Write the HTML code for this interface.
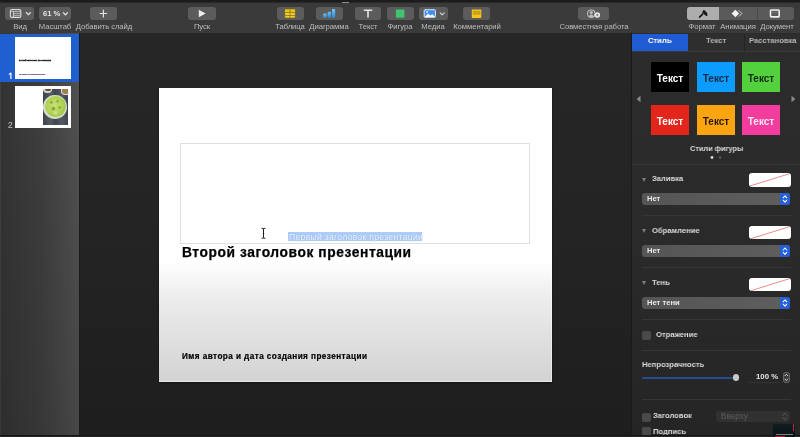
<!DOCTYPE html>
<html><head><meta charset="utf-8">
<style>
*{margin:0;padding:0;box-sizing:border-box}
html,body{width:800px;height:437px;overflow:hidden;background:linear-gradient(180deg,#272727 0%,#242424 50%,#1e1e1e 100%);font-family:"Liberation Sans",sans-serif}
.a{position:absolute}
svg{position:absolute;overflow:visible}
.lbl,.plbl,.sw,.dd span,.num,.t{will-change:transform}
#top{left:0;top:0;width:800px;height:3px;background:linear-gradient(180deg,#1a1a1a 0%,#1c1c1c 50%,#2e2e2e 100%)}
#tb{left:0;top:3px;width:800px;height:30px;background:#3a3a3a}
.btn{position:absolute;top:6.5px;height:13.7px;background:#5c5c5c;border-radius:3px}
.lbl{position:absolute;top:22.2px;width:100px;text-align:center;font-size:7.7px;letter-spacing:-0.08px;color:#bcbcbc;white-space:nowrap;line-height:10px}
#side{left:0;top:33px;width:79.5px;height:404px;background:linear-gradient(90deg,#454545 0px,#333 1.5px,#383838 25%,#3d3d3d 50%,#505050 100%)}
#sideshade{left:0;top:33px;width:79px;height:404px;background:linear-gradient(180deg,rgba(0,0,0,0) 0%,rgba(0,0,0,0) 20%,rgba(0,0,0,.11) 100%)}
#sideb{left:78.6px;top:33px;width:1.9px;height:404px;background:#1b1b1b}
#sel{left:0;top:33.7px;width:78.6px;height:48.5px;background:#1f5fd0}
.thumb{position:absolute;left:15px;width:56px;height:42px;background:#fff;overflow:hidden}
.num{position:absolute;font-size:8.3px;color:#fff;line-height:8px;-webkit-text-stroke:0.15px currentColor}
#slide{left:159px;top:88px;width:392.5px;height:294px;background:linear-gradient(180deg,#fff 0%,#fff 59%,#ececec 72%,#dfdfdf 86%,#d3d3d3 100%);box-shadow:inset -1px -1px 0 rgba(255,255,255,.45),0 1px 2px rgba(0,0,0,.45)}
#panel{left:631.5px;top:33px;width:168.5px;height:404px;background:linear-gradient(180deg,#2c2c2c 0%,#2a2a2a 55%,#252525 100%)}
#pborder{left:631px;top:33px;width:1px;height:404px;background:#1a1a1a}
.sw{position:absolute;width:38px;height:30px;font-size:10px;font-weight:bold;text-align:center;line-height:33.5px}
.sep{position:absolute;left:632px;width:168px;height:1px;background:#363636}
.plbl{position:absolute;font-size:8.1px;color:#dadada;font-weight:bold;white-space:nowrap;line-height:10px;margin-top:-0.4px;transform:scaleX(0.94);transform-origin:0 0}
.tri{position:absolute;width:0;height:0;border-left:2.8px solid transparent;border-right:2.8px solid transparent;border-top:4.6px solid #7d7d7d}
.well{position:absolute;left:749px;width:41.5px;height:13.5px;background:#fff;border-radius:3px;overflow:hidden}
.dd{position:absolute;left:642px;width:148px;height:12px;background:linear-gradient(90deg,#555 0%,#5e5e5e 100%);border-radius:3px;overflow:hidden}
.dd span{position:absolute;left:5px;top:1px;font-size:7.6px;line-height:10px;color:#e8e8e8;font-weight:bold}
.dd i{position:absolute;right:0;top:0;width:10px;height:12px;background:#2660d8}
.cb{position:absolute;width:9px;height:9px;background:#4a4a4a;border-radius:2px}
</style></head><body>
<div class="a" id="top"></div>
<div class="a" id="tb"></div>
<div class="a" style="left:342px;top:1.5px;width:7px;height:1px;background:#8a8a8a"></div>

<!-- toolbar: Вид -->
<div class="btn" style="left:5px;width:28.5px"></div>
<svg style="left:0;top:0" width="1" height="1">
  <rect x="10.4" y="9.5" width="10.4" height="7.9" rx="1.4" fill="none" stroke="#dedede" stroke-width="1.1"/>
  <line x1="10.6" y1="11.3" x2="20.6" y2="11.3" stroke="#dedede" stroke-width="0.8"/>
  <line x1="13.4" y1="11.3" x2="13.4" y2="17.2" stroke="#dedede" stroke-width="0.9"/>
  <line x1="13.4" y1="13.3" x2="20.6" y2="13.3" stroke="#d0d0d0" stroke-width="0.8"/>
  <line x1="13.4" y1="15.3" x2="20.6" y2="15.3" stroke="#d0d0d0" stroke-width="0.8"/>
  <polyline points="26,12.3 28.35,14.7 30.7,12.3" fill="none" stroke="#e0e0e0" stroke-width="1.25"/>
</svg>
<div class="lbl" style="left:-30.5px">Вид</div>

<!-- Масштаб -->
<div class="btn" style="left:39px;width:31.5px"></div>
<div class="a t" style="left:42.5px;top:9px;font-size:7.6px;font-weight:bold;color:#e4e4e4;line-height:9px">61 %</div>
<svg style="left:0;top:0" width="1" height="1"><polyline points="63,12.4 65.4,14.8 67.8,12.4" fill="none" stroke="#e2e2e2" stroke-width="1.3"/></svg>
<div class="lbl" style="left:5.2px">Масштаб</div>

<!-- Добавить слайд -->
<div class="btn" style="left:90px;width:27px"></div>
<svg style="left:0;top:0" width="1" height="1"><path d="M99.6 13.5H107.2M103.4 9.7V17.4" stroke="#e2e2e2" stroke-width="1.2"/></svg>
<div class="lbl" style="left:53.5px">Добавить слайд</div>

<!-- Пуск -->
<div class="btn" style="left:188px;width:28px"></div>
<svg style="left:0;top:0" width="1" height="1"><path d="M198.8 9.8L205.7 13.5L198.8 17.2Z" fill="#ececec"/></svg>
<div class="lbl" style="left:152px">Пуск</div>

<!-- Таблица -->
<div class="btn" style="left:276.5px;width:27px"></div>
<svg style="left:0;top:0" width="1" height="1">
  <rect x="284.8" y="9.2" width="10.4" height="8.7" rx="0.9" fill="#f2cf30" stroke="#6e5a12" stroke-width="0.5"/>
  <rect x="285.1" y="9.5" width="9.8" height="3" fill="#e6c414"/>
  <path d="M285 12.5H295M285 15.5H295M290 9.4V17.7" stroke="#8c7016" stroke-width="0.75"/>
</svg>
<div class="lbl" style="left:240px">Таблица</div>

<!-- Диаграмма -->
<div class="btn" style="left:315.5px;width:27.5px"></div>
<svg style="left:0;top:0" width="1" height="1">
  <defs><linearGradient id="bg1" x1="0" y1="0" x2="0" y2="1"><stop offset="0" stop-color="#6cc4f4"/><stop offset="1" stop-color="#2b86dc"/></linearGradient></defs>
  <rect x="323.2" y="13.6" width="3.4" height="4.2" rx="1" fill="url(#bg1)"/>
  <rect x="327.6" y="11.7" width="3.3" height="6.1" rx="1" fill="url(#bg1)"/>
  <rect x="331.9" y="9.1" width="3.3" height="8.7" rx="1" fill="url(#bg1)"/>
</svg>
<div class="lbl" style="left:279.2px">Диаграмма</div>

<!-- Текст -->
<div class="btn" style="left:354.5px;width:26.5px"></div>
<svg style="left:0;top:0" width="1" height="1"><path d="M363.8 10.3H372.2M368 10.3V17.4" stroke="#e6e6e6" stroke-width="1.6"/></svg>
<div class="lbl" style="left:317.6px">Текст</div>

<!-- Фигура -->
<div class="btn" style="left:387px;width:26.8px"></div>
<svg style="left:0;top:0" width="1" height="1"><rect x="395.9" y="9.5" width="8.5" height="8.2" rx="0.6" fill="#3ec56e"/></svg>
<div class="lbl" style="left:350px">Фигура</div>

<!-- Медиа -->
<div class="btn" style="left:419px;width:28.5px"></div>
<svg style="left:0;top:0" width="1" height="1">
  <rect x="424.2" y="9.7" width="11.2" height="7.6" rx="0.8" fill="#3f8ef2" stroke="#f0f4ff" stroke-width="0.9"/>
  <path d="M424.6 16.9L428 13.6L430.5 15.6L432.3 14.2L435.2 16.9Z" fill="#f2f6ff"/>
  <circle cx="427" cy="11.9" r="0.9" fill="#f2f6ff"/>
  <polyline points="439.9,12.6 442.2,14.8 444.5,12.6" fill="none" stroke="#dcdcdc" stroke-width="1.1"/>
</svg>
<div class="lbl" style="left:383.2px">Медиа</div>

<!-- Комментарий -->
<div class="btn" style="left:463px;width:27px"></div>
<svg style="left:0;top:0" width="1" height="1">
  <rect x="471.8" y="9.5" width="9.5" height="8.5" rx="0.8" fill="#f5c51a"/>
  <rect x="472.8" y="10.8" width="7.5" height="4" fill="#caa21c"/>
</svg>
<div class="lbl" style="left:426.5px">Комментарий</div>

<!-- Совместная работа -->
<div class="btn" style="left:578.3px;width:31px"></div>
<svg style="left:0;top:0" width="1" height="1">
  <circle cx="591.3" cy="13.7" r="3.9" fill="none" stroke="#d8d8d8" stroke-width="0.9"/>
  <circle cx="591.3" cy="12.5" r="1.6" fill="#bdbdbd"/>
  <path d="M589 16.9Q589.2 14.3 591.3 14.3Q593.4 14.3 593.6 16.9Z" fill="#bdbdbd"/>
  <circle cx="597.3" cy="15" r="2.8" fill="#eaeaea"/>
  <path d="M595.9 15H598.7M597.3 13.6V16.4" stroke="#777" stroke-width="0.8"/>
</svg>
<div class="lbl" style="left:543.5px">Совместная работа</div>

<!-- segmented -->
<div class="btn" style="left:687.2px;width:106.5px;background:#5a5a5a"></div>
<div class="btn" style="left:687.2px;width:32px;background:#adadad;border-radius:3px 0 0 3px"></div>
<div class="a" style="left:756.5px;top:7px;width:0.6px;height:13px;background:#4a4a4a"></div>
<svg style="left:0;top:0" width="1" height="1">
  <path d="M699.6 17.1L702.6 14.1" stroke="#1a1a1a" stroke-width="1.7" stroke-linecap="round"/>
  <path d="M702 12.6L703.8 9.7L705.6 11.2L707.4 13.4L707.2 16.3L705.8 15.8L704.4 14.4Z" fill="#1a1a1a"/>
  <path d="M731.6 13.5L735.4 9.8L739.2 13.5L735.4 17.2Z" fill="#f4f4f4"/>
  <polyline points="738.8,10.4 741.8,13.5 738.8,16.6" fill="none" stroke="#dcdcdc" stroke-width="0.9"/>
  <rect x="770.5" y="10" width="8.7" height="6.9" rx="0.8" fill="none" stroke="#efefef" stroke-width="1.6"/><line x1="771.2" y1="12.4" x2="778.5" y2="12.4" stroke="#8a8a8a" stroke-width="0.6"/>
</svg>
<div class="lbl" style="left:652px">Формат</div>
<div class="lbl" style="left:688px">Анимация</div>
<div class="lbl" style="left:726.6px">Документ</div>

<!-- sidebar -->
<div class="a" id="side"></div>
<div class="a" id="sideshade"></div>
<div class="a" id="sideb"></div>
<div class="a" id="sel"></div>
<div class="thumb" style="top:37px">
  <div class="a t" style="left:3.5px;top:21.8px;font-size:10px;line-height:12px;font-weight:bold;color:#000;white-space:nowrap;transform:scale(0.19,0.24);transform-origin:0 0;letter-spacing:0.5px;-webkit-text-stroke:1.4px #111">Второй заголовок презентации</div>
  <div class="a t" style="left:3.5px;top:36.8px;font-size:10px;line-height:12px;font-weight:bold;color:#000;white-space:nowrap;transform:scale(0.116,0.15);transform-origin:0 0;letter-spacing:0.5px;-webkit-text-stroke:0.6px #444">Имя автора и дата создания презентации</div>
</div>
<svg style="left:0;top:0" width="1" height="1"><path d="M8.9 74.6L10.9 73.1V78.9" fill="none" stroke="#f2f6ff" stroke-width="1.3" stroke-linejoin="round"/></svg>
<div class="thumb" style="top:86.1px">
  <div class="a" style="left:28px;top:2.6px;width:24.8px;height:36px;background:linear-gradient(90deg,#3e424a 0%,#555a63 30%,#41454d 50%,#555962 75%,#3f434b 100%)"></div>
  <div class="a" style="left:28.2px;top:2.6px;width:9px;height:4.2px;border-radius:0 0 5px 5px;background:#d8d4cc"></div>
  <div class="a" style="left:30px;top:2.6px;width:6px;height:2.6px;border-radius:0 0 3px 3px;background:#6a4a3a"></div>
  <div class="a" style="left:45.5px;top:2.6px;width:7.3px;height:6.5px;border-radius:0 0 0 4px;background:#e4ded2"></div>
  <div class="a" style="left:47px;top:2.6px;width:5.8px;height:5px;border-radius:0 0 0 3px;background:#a08050"></div>
  <div class="a" style="left:28.4px;top:9.2px;width:23.6px;height:23.4px;border-radius:50%;background:#d6dccf"></div>
  <div class="a" style="left:29.6px;top:10.4px;width:21.2px;height:21px;border-radius:50%;background:radial-gradient(circle at 30% 30%,rgba(70,120,40,.7) 0,rgba(70,120,40,0) 2px),radial-gradient(circle at 60% 25%,rgba(70,120,40,.6) 0,rgba(70,120,40,0) 2px),radial-gradient(circle at 40% 60%,rgba(60,110,35,.7) 0,rgba(60,110,35,0) 2.5px),radial-gradient(circle at 70% 55%,rgba(70,120,40,.6) 0,rgba(70,120,40,0) 2px),radial-gradient(circle at 50% 80%,rgba(220,235,170,.8) 0,rgba(220,235,170,0) 3px),radial-gradient(circle at 45% 45%,#c8e070 0%,#b4d456 45%,#9cc446 80%,#c6d6a6 100%)"></div>
</div>
<div class="num" style="left:8.1px;top:120.6px;color:#b8b8b8">2</div>

<!-- slide -->
<div class="a" id="slide"></div>
<div class="a" style="left:180px;top:143px;width:350px;height:100.5px;border:1px solid #e0e0e0"></div>
<div class="a" style="left:288.3px;top:232.2px;width:134px;height:9.3px;background:#adccf8"></div>
<div class="a t" style="left:288.6px;top:231.6px;font-size:8.6px;line-height:11px;letter-spacing:0.3px;color:#f2f7ff;text-shadow:0 0 1px rgba(70,120,200,.55);white-space:nowrap">Первый заголовок презентации</div>
<svg style="left:0;top:0" width="1" height="1"><path d="M261.6 228.3Q263.5 228.8 265.4 228.3M263.5 228.8V237.8M261.6 238.3Q263.5 237.8 265.4 238.3M262.8 233.5H264.2" fill="none" stroke="#1e1e1e" stroke-width="1"/></svg>
<div class="a t" style="left:182px;top:244.6px;font-size:13.8px;line-height:16px;font-weight:bold;color:#000;letter-spacing:0.58px;-webkit-text-stroke:0.25px #000;white-space:nowrap">Второй заголовок презентации</div>
<div class="a t" style="left:182px;top:351.6px;font-size:8.2px;line-height:10px;font-weight:bold;color:#000;letter-spacing:0.43px;-webkit-text-stroke:0.2px #000;white-space:nowrap">Имя автора и дата создания презентации</div>

<!-- panel -->
<div class="a" id="panel"></div>
<div class="a" id="pborder"></div>
<div class="a" style="left:632px;top:33.6px;width:56px;height:17.5px;background:#1f5bd2"></div>
<div class="a" style="left:688px;top:33.6px;width:112px;height:17px;background:#2e2e2e"></div>
<div class="a" style="left:632px;top:50.6px;width:168px;height:1px;background:#3a3a3a"></div>
<div class="a" style="left:743.5px;top:34px;width:1px;height:16.5px;background:#232323"></div>
<div class="plbl" style="left:648px;top:36.7px;color:#fff">Стиль</div>
<div class="plbl" style="left:705.6px;top:36.7px;color:#b4b4b4">Текст</div>
<div class="plbl" style="left:748.7px;top:36.7px;color:#b4b4b4">Расстановка</div>

<div class="sw" style="left:651.4px;top:62px;background:#000;color:#fff">Текст</div>
<div class="sw" style="left:696.8px;top:62px;background:#0b9cfd;color:#1a2a48">Текст</div>
<div class="sw" style="left:742px;top:62px;background:#52d13c;color:#142a12">Текст</div>
<div class="sw" style="left:651.4px;top:104.6px;background:#e3261c;color:#fff">Текст</div>
<div class="sw" style="left:696.8px;top:104.6px;background:#fca510;color:#2a1a05">Текст</div>
<div class="sw" style="left:742px;top:104.6px;background:#f23c9e;color:#fde6f2">Текст</div>
<svg style="left:0;top:0" width="1" height="1">
  <path d="M640.5 95.8V102.2L636.6 99Z" fill="#8a8a8a"/>
  <path d="M791.5 95.8V102.2L795.4 99Z" fill="#8a8a8a"/>
  <circle cx="712" cy="157.5" r="1.4" fill="#d6d6d6"/>
  <circle cx="720" cy="157.5" r="1.2" fill="#5a5a5a"/>
</svg>
<div class="plbl" style="left:689.7px;top:144.5px;font-size:7.8px">Стили фигуры</div>

<div class="sep" style="top:163.5px"></div>
<div class="tri" style="left:642px;top:177.5px"></div>
<div class="plbl" style="left:652px;top:174.5px">Заливка</div>
<div class="well" style="top:173.3px"><svg width="42" height="14" style="left:0;top:0"><line x1="1" y1="13" x2="41" y2="0.5" stroke="#e07070" stroke-width="0.8"/></svg></div>
<div class="dd" style="top:193px"><span>Нет</span><i></i></div>

<div class="sep" style="top:215px;left:642px;width:148.5px"></div>
<div class="tri" style="left:642px;top:229px"></div>
<div class="plbl" style="left:652px;top:226.4px">Обрамление</div>
<div class="well" style="top:225.6px"><svg width="42" height="14" style="left:0;top:0"><line x1="1" y1="13" x2="41" y2="0.5" stroke="#e07070" stroke-width="0.8"/></svg></div>
<div class="dd" style="top:245.2px"><span>Нет</span><i></i></div>

<div class="sep" style="top:267.4px;left:642px;width:148.5px"></div>
<div class="tri" style="left:642px;top:281px"></div>
<div class="plbl" style="left:652px;top:278px">Тень</div>
<div class="well" style="top:277.5px"><svg width="42" height="14" style="left:0;top:0"><line x1="1" y1="13" x2="41" y2="0.5" stroke="#e07070" stroke-width="0.8"/></svg></div>
<div class="dd" style="top:297px"><span>Нет тени</span><i></i></div>

<svg style="left:0;top:0" width="1" height="1">
  <g fill="none" stroke="#fff" stroke-width="1.05" stroke-linecap="round" stroke-linejoin="round">
    <polyline points="783.2,197.8 785,195.8 786.8,197.8"/><polyline points="783.2,200.2 785,202.2 786.8,200.2"/>
    <polyline points="783.2,250.0 785,248.0 786.8,250.0"/><polyline points="783.2,252.4 785,254.4 786.8,252.4"/>
    <polyline points="783.2,301.8 785,299.8 786.8,301.8"/><polyline points="783.2,304.2 785,306.2 786.8,304.2"/>
  </g>
</svg>

<div class="sep" style="top:319px;left:642px;width:148.5px"></div>
<div class="cb" style="left:641.7px;top:331px"></div>
<div class="plbl" style="left:655.7px;top:330.8px">Отражение</div>
<div class="sep" style="top:350px;left:642px;width:148.5px"></div>
<div class="plbl" style="left:641.8px;top:360.5px">Непрозрачность</div>
<div class="a" style="left:642.2px;top:377px;width:94px;height:2px;background:#284b94;border-radius:1px"></div>
<div class="a" style="left:732.6px;top:374.4px;width:6.8px;height:6.8px;border-radius:50%;background:#c8c8c8"></div>
<div class="a" style="left:749.4px;top:371.9px;width:31px;height:11px;background:#262626;border-bottom:1px solid #333"></div>
<div class="a t" style="left:756.2px;top:372.3px;font-size:7.8px;line-height:10px;font-weight:bold;color:#e4e4e4;white-space:nowrap">100 %</div>
<div class="a" style="left:782.8px;top:371.5px;width:7px;height:11.7px;background:#3e3e3e;border:0.8px solid #676767;border-radius:2.5px"></div>
<svg style="left:0;top:0" width="1" height="1"><g fill="none" stroke="#e6e6e6" stroke-width="0.9">
  <polyline points="784.6,376 786.3,374.3 788,376"/><polyline points="784.6,378.8 786.3,380.5 788,378.8"/></g></svg>
<div class="sep" style="top:399px;left:642px;width:148.5px"></div>
<div class="cb" style="left:641.7px;top:412.8px"></div>
<div class="plbl" style="left:652.9px;top:411.5px">Заголовок</div>
<div class="a" style="left:716px;top:410.8px;width:74px;height:11.7px;background:#313131;border-radius:3px"></div>
<div class="a t" style="left:721px;top:411.5px;font-size:8.2px;line-height:10px;color:#555;-webkit-text-stroke:0.2px #555;white-space:nowrap">Вверху</div>
<svg style="left:0;top:0" width="1" height="1"><g fill="none" stroke="#5e5e5e" stroke-width="0.9">
  <polyline points="782.7,415.6 784.8,413.2 786.9,415.6"/><polyline points="782.7,417.6 784.8,420 786.9,417.6"/></g></svg>
<div class="cb" style="left:641.7px;top:426.7px"></div>
<div class="plbl" style="left:652.9px;top:427px">Подпись</div>
<div class="a" style="left:0;top:435px;width:800px;height:0.8px;background:#161616"></div>
<div class="a" style="left:0;top:435.8px;width:800px;height:1.2px;background:#262626"></div>
<!-- overlay -->
<div class="a" style="left:773px;top:424px;width:22px;height:13px;background:linear-gradient(180deg,#0f1d21 0%,#0b1214 100%)"></div>
<div class="a" style="left:792.6px;top:424px;width:1.6px;height:7px;background:#c8283a"></div>
<div class="a" style="left:776px;top:433.6px;width:17px;height:0.7px;background:#7d858c"></div>
<div class="a" style="left:775px;top:435.6px;width:10px;height:1.4px;background:#a82434"></div>
</body></html>
